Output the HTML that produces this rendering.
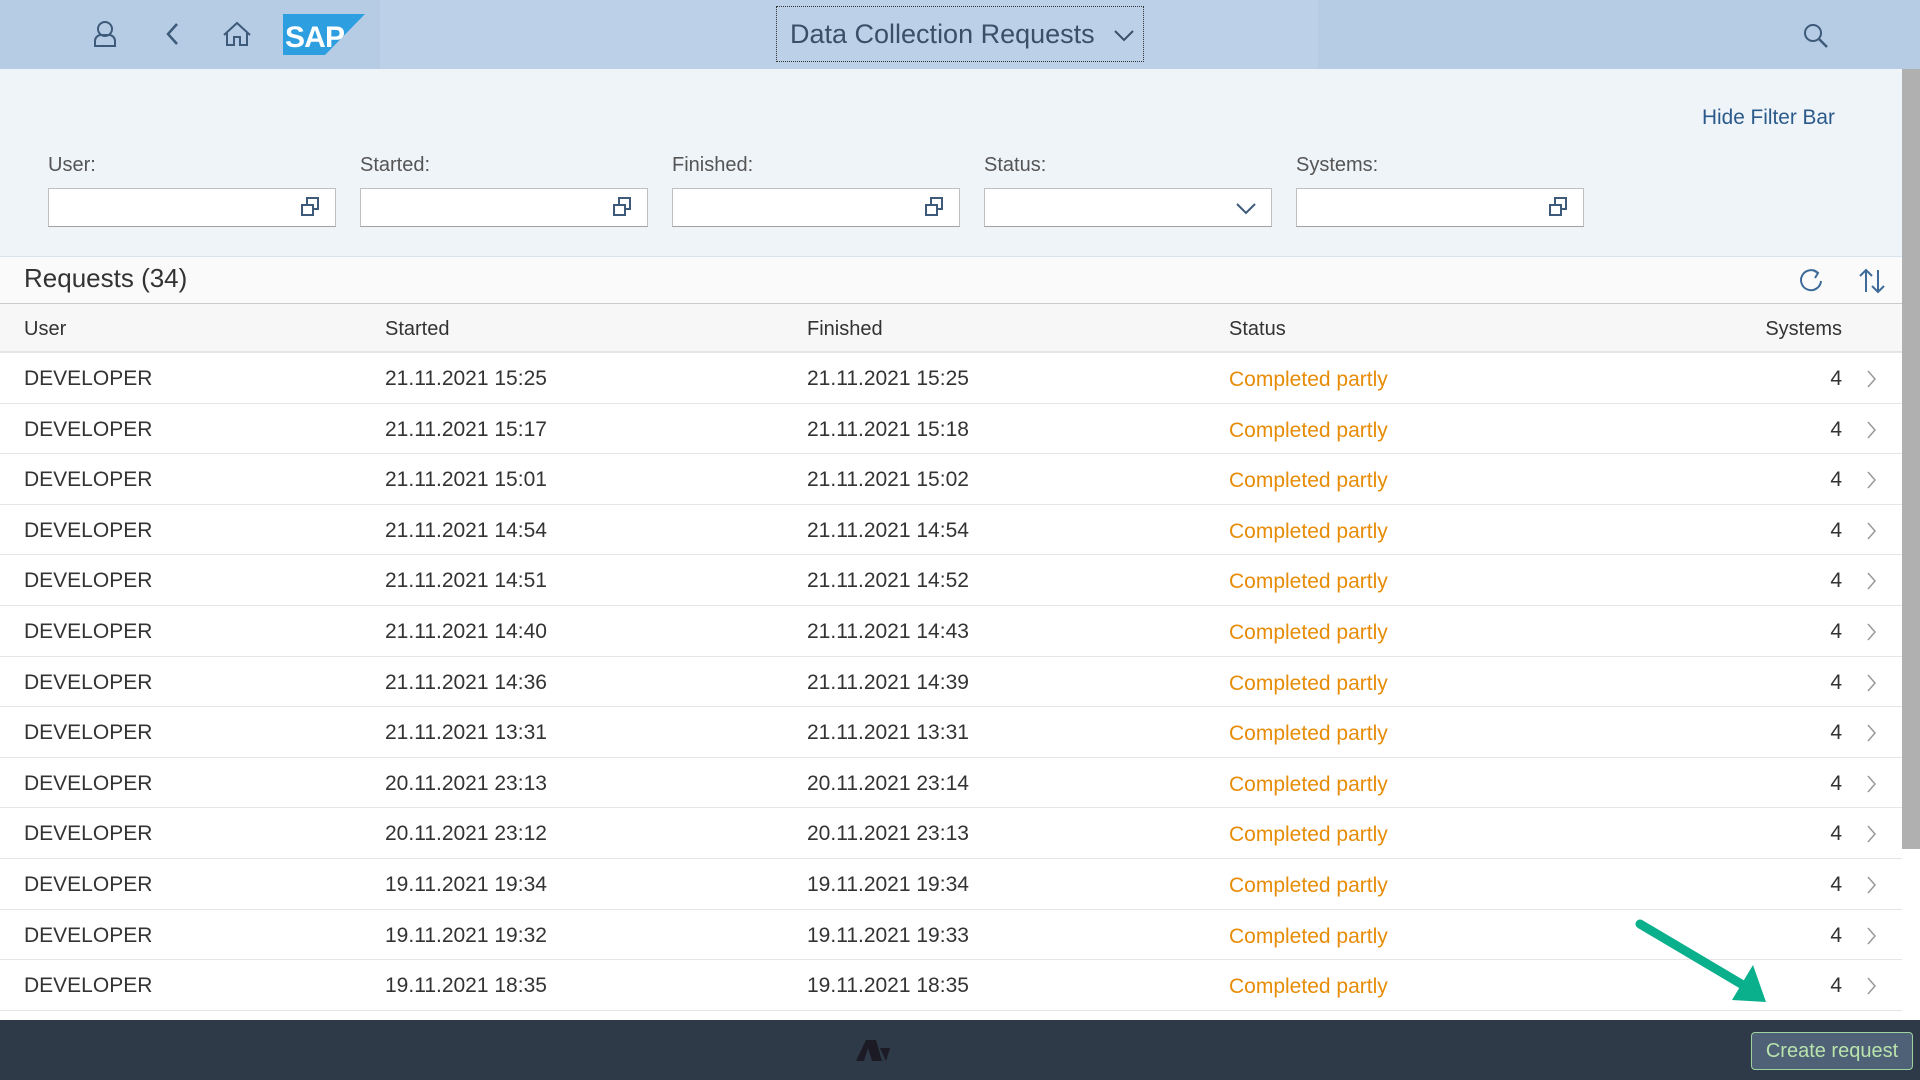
<!DOCTYPE html>
<html><head><meta charset="utf-8"><style>
*{margin:0;padding:0;box-sizing:border-box}
body{width:1920px;height:1080px;overflow:hidden;font-family:"Liberation Sans",Arial,sans-serif;background:#fff;position:relative;color:#333}
.hdr{position:absolute;left:0;top:0;width:1920px;height:69px;background:#b6cce4}
.hdr .mid{position:absolute;left:380px;top:0;width:938px;height:69px;background:#bcd1e8}
.title{position:absolute;left:776px;top:6px;width:368px;height:56px;border:1px dotted #333;font-size:27px;color:#3b5068;line-height:54px;padding-left:13px}
.filter{position:absolute;left:0;top:69px;width:1902px;height:188px;background:#eff4f9;border-bottom:1px solid #d8e3ee}
.scroll{position:absolute;left:1902px;top:69px;width:18px;height:780px;background:#b0b0b0}
.lbl{position:absolute;top:154px;font-size:20px;color:#555}
.inp{position:absolute;top:188px;width:288px;height:39px;background:#fff;border:1px solid #bfbfbf;border-bottom-color:#a0a0a0}
.hide{position:absolute;left:1702px;top:106px;font-size:20.8px;color:#2b5a8a}
.tb{position:absolute;left:0;top:257px;width:1902px;height:47px;background:#fafafa;border-bottom:1px solid #ccc}
.tb .t{position:absolute;left:24px;top:6px;font-size:26px;color:#333}
.ch{position:absolute;left:0;top:304px;width:1902px;height:49px;background:#f7f7f7;border-bottom:2px solid #e5e5e5;font-size:20px;color:#333}
.ch span,.row span{position:absolute}
.row{position:absolute;left:0;width:1902px;height:50.6px;border-bottom:1px solid #e5e5e5;font-size:21px;color:#333}
.row svg{position:absolute;left:1866px;top:17px}
.st{color:#e78c07}
.foot{position:absolute;left:0;top:1020px;width:1920px;height:60px;background:#2f3a48}
.btn{position:absolute;left:1751px;top:1032px;width:162px;height:38px;background:#4e6176;border:1px solid #9fd29f;border-radius:4px;color:#b9e3ad;font-size:20px;line-height:36px;text-align:center}
</style></head><body>
<div class="hdr"><div class="mid"></div>
<svg style="position:absolute;left:0;top:0" width="400" height="69">
<g fill="none" stroke="#3d5a7a" stroke-width="2">
<circle cx="105" cy="29" r="7"/><path d="M95 46v-5a6 6 0 0 1 6-6h8a6 6 0 0 1 6 6v5z"/>
<path d="M177 24l-9 10 9 10" stroke-width="2.5"/>
<path d="M224 35l13-12 13 12M227 32v13h7v-8h6v8h7v-13"/>
</g>
<polygon points="283,14 365,14 325,55 283,55" fill="#2d9ee0"/>
<text x="285" y="47" font-family="Liberation Sans" font-weight="bold" font-size="30" fill="#fff" textLength="60">SAP</text>
</svg>
<div class="title">Data Collection Requests<svg style="position:absolute;left:336px;top:22px" width="22" height="14"><path d="M2 2l9 9 9-9" fill="none" stroke="#3b5068" stroke-width="2"/></svg></div>
<svg style="position:absolute;left:1802px;top:22px" width="28" height="28"><circle cx="11" cy="11" r="8" fill="none" stroke="#3d5a7a" stroke-width="2"/><path d="M17 17l8 8" stroke="#3d5a7a" stroke-width="2.5"/></svg>
</div>
<div class="filter"></div>
<div class="scroll"></div>
<div class="hide">Hide Filter Bar</div>
<div class="lbl" style="left:48px">User:</div>
<div class="lbl" style="left:360px">Started:</div>
<div class="lbl" style="left:672px">Finished:</div>
<div class="lbl" style="left:984px">Status:</div>
<div class="lbl" style="left:1296px">Systems:</div>
<div class="inp" style="left:48px"></div>
<div class="inp" style="left:360px"></div>
<div class="inp" style="left:672px"></div>
<div class="inp" style="left:984px"></div>
<div class="inp" style="left:1296px"></div>
<svg style="position:absolute;left:0;top:188px" width="1700" height="40"><g fill="none" stroke="#3d5a7a" stroke-width="2">
<rect x="302" y="17" width="11" height="10"/><path d="M307 16v-6h11v11h-5"/>
<rect x="614" y="17" width="11" height="10"/><path d="M619 16v-6h11v11h-5"/>
<rect x="926" y="17" width="11" height="10"/><path d="M931 16v-6h11v11h-5"/>
<rect x="1550" y="17" width="11" height="10"/><path d="M1555 16v-6h11v11h-5"/>
<path d="M1237 16l9 9 9-9"/>
</g></svg>
<div class="tb"><div class="t">Requests (34)</div>
<svg style="position:absolute;left:1798px;top:10px" width="90" height="30"><g fill="none" stroke="#3d6a99" stroke-width="2">
<path d="M20 6a10 10 0 1 0 3 8"/><path d="M15 3l5 3-3 5"/>
<path d="M68 25V3M62 9l6-6 6 6M80 3v22M74 19l6 6 6-6"/></g></svg>
</div>
<div class="ch"><span style="left:24px;top:14px">User</span><span style="left:385px;top:14px">Started</span><span style="left:807px;top:14px">Finished</span><span style="left:1229px;top:14px">Status</span><span style="right:60px;top:14px">Systems</span></div>
<div class="row" style="top:353px"><span style="left:24px;top:14px">DEVELOPER</span><span style="left:385px;top:14px">21.11.2021 15:25</span><span style="left:807px;top:14px">21.11.2021 15:25</span><span class="st" style="left:1229px;top:15px">Completed partly</span><span style="right:60px;top:14px">4</span><svg width="12" height="18"><path d="M2 1l7 8-7 8" fill="none" stroke="#999" stroke-width="1.5"/></svg></div>
<div class="row" style="top:403.6px"><span style="left:24px;top:14px">DEVELOPER</span><span style="left:385px;top:14px">21.11.2021 15:17</span><span style="left:807px;top:14px">21.11.2021 15:18</span><span class="st" style="left:1229px;top:15px">Completed partly</span><span style="right:60px;top:14px">4</span><svg width="12" height="18"><path d="M2 1l7 8-7 8" fill="none" stroke="#999" stroke-width="1.5"/></svg></div>
<div class="row" style="top:454.2px"><span style="left:24px;top:14px">DEVELOPER</span><span style="left:385px;top:14px">21.11.2021 15:01</span><span style="left:807px;top:14px">21.11.2021 15:02</span><span class="st" style="left:1229px;top:15px">Completed partly</span><span style="right:60px;top:14px">4</span><svg width="12" height="18"><path d="M2 1l7 8-7 8" fill="none" stroke="#999" stroke-width="1.5"/></svg></div>
<div class="row" style="top:504.8px"><span style="left:24px;top:14px">DEVELOPER</span><span style="left:385px;top:14px">21.11.2021 14:54</span><span style="left:807px;top:14px">21.11.2021 14:54</span><span class="st" style="left:1229px;top:15px">Completed partly</span><span style="right:60px;top:14px">4</span><svg width="12" height="18"><path d="M2 1l7 8-7 8" fill="none" stroke="#999" stroke-width="1.5"/></svg></div>
<div class="row" style="top:555.4px"><span style="left:24px;top:14px">DEVELOPER</span><span style="left:385px;top:14px">21.11.2021 14:51</span><span style="left:807px;top:14px">21.11.2021 14:52</span><span class="st" style="left:1229px;top:15px">Completed partly</span><span style="right:60px;top:14px">4</span><svg width="12" height="18"><path d="M2 1l7 8-7 8" fill="none" stroke="#999" stroke-width="1.5"/></svg></div>
<div class="row" style="top:606px"><span style="left:24px;top:14px">DEVELOPER</span><span style="left:385px;top:14px">21.11.2021 14:40</span><span style="left:807px;top:14px">21.11.2021 14:43</span><span class="st" style="left:1229px;top:15px">Completed partly</span><span style="right:60px;top:14px">4</span><svg width="12" height="18"><path d="M2 1l7 8-7 8" fill="none" stroke="#999" stroke-width="1.5"/></svg></div>
<div class="row" style="top:656.6px"><span style="left:24px;top:14px">DEVELOPER</span><span style="left:385px;top:14px">21.11.2021 14:36</span><span style="left:807px;top:14px">21.11.2021 14:39</span><span class="st" style="left:1229px;top:15px">Completed partly</span><span style="right:60px;top:14px">4</span><svg width="12" height="18"><path d="M2 1l7 8-7 8" fill="none" stroke="#999" stroke-width="1.5"/></svg></div>
<div class="row" style="top:707.2px"><span style="left:24px;top:14px">DEVELOPER</span><span style="left:385px;top:14px">21.11.2021 13:31</span><span style="left:807px;top:14px">21.11.2021 13:31</span><span class="st" style="left:1229px;top:15px">Completed partly</span><span style="right:60px;top:14px">4</span><svg width="12" height="18"><path d="M2 1l7 8-7 8" fill="none" stroke="#999" stroke-width="1.5"/></svg></div>
<div class="row" style="top:757.8px"><span style="left:24px;top:14px">DEVELOPER</span><span style="left:385px;top:14px">20.11.2021 23:13</span><span style="left:807px;top:14px">20.11.2021 23:14</span><span class="st" style="left:1229px;top:15px">Completed partly</span><span style="right:60px;top:14px">4</span><svg width="12" height="18"><path d="M2 1l7 8-7 8" fill="none" stroke="#999" stroke-width="1.5"/></svg></div>
<div class="row" style="top:808.4px"><span style="left:24px;top:14px">DEVELOPER</span><span style="left:385px;top:14px">20.11.2021 23:12</span><span style="left:807px;top:14px">20.11.2021 23:13</span><span class="st" style="left:1229px;top:15px">Completed partly</span><span style="right:60px;top:14px">4</span><svg width="12" height="18"><path d="M2 1l7 8-7 8" fill="none" stroke="#999" stroke-width="1.5"/></svg></div>
<div class="row" style="top:859px"><span style="left:24px;top:14px">DEVELOPER</span><span style="left:385px;top:14px">19.11.2021 19:34</span><span style="left:807px;top:14px">19.11.2021 19:34</span><span class="st" style="left:1229px;top:15px">Completed partly</span><span style="right:60px;top:14px">4</span><svg width="12" height="18"><path d="M2 1l7 8-7 8" fill="none" stroke="#999" stroke-width="1.5"/></svg></div>
<div class="row" style="top:909.6px"><span style="left:24px;top:14px">DEVELOPER</span><span style="left:385px;top:14px">19.11.2021 19:32</span><span style="left:807px;top:14px">19.11.2021 19:33</span><span class="st" style="left:1229px;top:15px">Completed partly</span><span style="right:60px;top:14px">4</span><svg width="12" height="18"><path d="M2 1l7 8-7 8" fill="none" stroke="#999" stroke-width="1.5"/></svg></div>
<div class="row" style="top:960.2px"><span style="left:24px;top:14px">DEVELOPER</span><span style="left:385px;top:14px">19.11.2021 18:35</span><span style="left:807px;top:14px">19.11.2021 18:35</span><span class="st" style="left:1229px;top:15px">Completed partly</span><span style="right:60px;top:14px">4</span><svg width="12" height="18"><path d="M2 1l7 8-7 8" fill="none" stroke="#999" stroke-width="1.5"/></svg></div>
<svg style="position:absolute;left:1620px;top:910px" width="160" height="100"><path d="M20 14L128 78" stroke="#0aaf8c" stroke-width="9" stroke-linecap="round"/><polygon points="146,92 112,90 133,55" fill="#0aaf8c"/></svg>
<div class="foot"></div>
<svg style="position:absolute;left:850px;top:1035px" width="45" height="30"><polygon points="6,26 16,5 26,5 32,26 22,26 18,13 14,26" fill="#1c1a24"/><polygon points="30,13 40,13 36,26" fill="#1c1a24"/></svg>
<div class="btn">Create request</div>
</body></html>
